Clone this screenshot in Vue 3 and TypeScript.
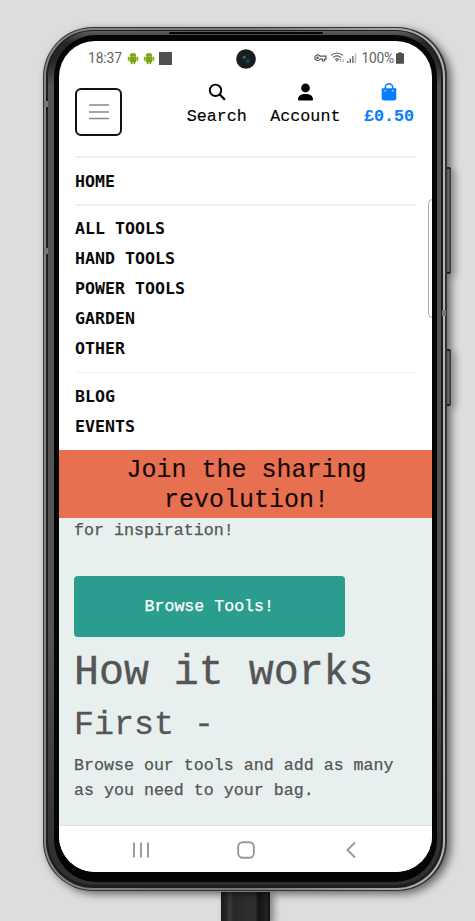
<script setup lang="ts">
const navGroups: string[][] = [
  ['Home'],
  ['All Tools', 'Hand Tools', 'Power Tools', 'Garden', 'Other'],
  ['Blog', 'Events'],
]
</script>

<template>
  <div class="stage">
    <div class="phone">
      <i class="side-key volume"></i>
      <i class="side-key power"></i>
      <i class="antenna a1"></i>
      <i class="antenna a2"></i>
      <i class="antenna a3"></i>
      <i class="earpiece"></i>
      <div class="rim">
        <div class="groove">
          <div class="metal">
            <div class="bezel">
              <div class="screen">
                <div class="status">
                  <span class="clock">18:37</span>
                  <svg v-for="n in 2" :key="n" class="droid" viewBox="0 0 12 13">
                    <path d="M3 4.3A3 3 0 0 1 9 4.3ZM3 4.8H9V10H3ZM1 5H2.3V8.6H1ZM9.7 5H11V8.6H9.7ZM4 10H5.3V12H4ZM6.7 10H8V12H6.7Z" fill="#7da514" stroke="#7da514" stroke-width=".4" />
                    <path d="M3.5 1L4.5 2.4M8.5 1L7.5 2.4" stroke="#7da514" stroke-width=".6" />
                  </svg>
                  <i class="square"></i>
                  <svg class="signals" viewBox="0 0 46 14">
                    <g fill="none" stroke="#555" stroke-width="1.2">
                      <path d="M7 5.2A2.8 2.8 0 1 0 7 8.2H9.5V10H11.5V8.2H13V5.2Z" />
                      <circle cx="4.6" cy="6.7" r=".7" />
                      <path d="M18 4.4Q24 -.4 30 4.4M20 6.6Q24 3.3 28 6.6M22 8.6Q24 7 26 8.6" />
                    </g>
                    <path d="M22.8 9.2H25.2L24 11Z" fill="#555" />
                    <path d="M27.3 11V8M26.3 9L27.3 8M30 8V11M31 10L30 11" stroke="#999" stroke-width=".8" />
                    <path d="M34 10H35.4V12H34ZM36.6 7.5H38V12H36.6ZM39.2 5H40.6V12H39.2Z" fill="#666" />
                    <path d="M41.8 2.5H43.2V12H41.8Z" fill="#bbb" />
                  </svg>
                  <span class="percent">100%</span>
                  <svg class="battery" viewBox="0 0 8 12"><path d="M2.5 .2H5.5V1.2H7.3Q8 1.2 8 1.9V11.2Q8 11.8 7.3 11.8H.7Q0 11.8 0 11.2V1.9Q0 1.2 .7 1.2H2.5Z" fill="#505050" /></svg>
                  <svg class="camera" viewBox="0 0 20 20">
                    <circle cx="10" cy="10" r="9.8" fill="#191c1d" />
                    <circle cx="10" cy="10" r="5.5" fill="#102326" />
                    <circle cx="8.2" cy="8.3" r="1.4" fill="#496b72" />
                    <circle cx="12" cy="12" r="1.8" fill="#28474c" />
                  </svg>
                </div>

                <header class="header">
                  <button class="burger" aria-label="Menu">
                    <svg viewBox="0 0 20 16"><path d="M0 1H20M0 8H20M0 14.5H20" stroke="#888" stroke-width="1.6" /></svg>
                  </button>
                  <div class="actions">
                    <a class="action">
                      <svg viewBox="0 0 18 18"><circle cx="7.5" cy="7.3" r="5.7" fill="none" stroke="#000" stroke-width="1.9" /><path d="M11.5 11.3L16.9 16.7" stroke="#000" stroke-width="2.3" /></svg>
                      <span>Search</span>
                    </a>
                    <a class="action">
                      <svg viewBox="0 0 18 18"><circle cx="9.5" cy="5" r="4.4" /><path d="M2 17.5V16C2 12.8 5.2 10.9 9.5 10.9S17 12.8 17 16V16.6Q17 17.5 16 17.5H3Q2 17.5 2 16.6Z" /></svg>
                      <span>Account</span>
                    </a>
                    <a class="action bag">
                      <svg viewBox="0 0 18 18"><path d="M5.3 8V4.5A3.7 3.7 0 0 1 12.7 4.5V8" fill="none" stroke="#0a7cff" stroke-width="1.6" /><path d="M1.7 5.2H16.3V15.3Q16.3 17.5 13.8 17.5H4.2Q1.7 17.5 1.7 15.3Z" fill="#0a7cff" /><path d="M5.3 7V8.6M12.7 7V8.6" stroke="#d9ebff" stroke-width="1.3" /></svg>
                      <span>£0.50</span>
                    </a>
                  </div>
                </header>

                <nav class="nav">
                  <ul v-for="(group, i) in navGroups" :key="i" class="group">
                    <li v-for="item in group" :key="item">{{ item }}</li>
                  </ul>
                </nav>

                <div class="banner">Join the sharing revolution!</div>

                <main class="content">
                  <p class="lead">for inspiration!</p>
                  <button class="browse">Browse Tools!</button>
                  <h1>How it works</h1>
                  <h2>First -</h2>
                  <p class="copy">Browse our tools and add as many as you need to your bag.</p>
                </main>

                <footer class="system">
                  <svg viewBox="0 0 18 18"><path d="M2 1.5V16.5M9 1.5V16.5M16 1.5V16.5" /></svg>
                  <svg viewBox="0 0 18 18"><rect x="1.2" y="1.2" width="15.6" height="15.6" rx="4.5" /></svg>
                  <svg viewBox="0 0 18 18"><path d="M13 1.5L5.5 9L13 16.5" /></svg>
                </footer>
                <i class="edge-handle"></i>
              </div>
            </div>
          </div>
        </div>
      </div>
    </div>
    <div class="cable"></div>
  </div>
</template>

<style>
body {
  margin: 0;
  background: #dddddd;
}
</style>

<style scoped>
.stage {
  box-sizing: border-box;
  width: 475px;
  height: 921px;
  padding: 27px 0 0 43px;
  overflow: hidden;
  background: #dddddd;
  font-family: "Liberation Mono", monospace;
}
.stage * {
  box-sizing: border-box;
}
.phone {
  position: relative;
  width: 404px;
  height: 864px;
  padding: 1px 2px 1px 1px;
  border-radius: 50px;
  background: #343434;
  box-shadow: 4px 3px 9px rgba(0, 0, 0, 0.55);
}
.rim {
  height: 100%;
  padding: 2px 2px 2px 2px;
  border-radius: 49px;
  background: linear-gradient(90deg, #858585, #777 50%, #b6b6b9);
}
.groove {
  height: 100%;
  padding: 1px 2px 3px 2px;
  border-radius: 47px;
  background: #1d1d1e;
}
.metal {
  height: 100%;
  padding: 4px 4px 3px 6px;
  border-radius: 45px;
  background: linear-gradient(180deg, #5f5e5f 0, #262626 12px, #262626 30px, #565556 55px, #565556 70%, #303030 97%);
}
.bezel {
  height: 100%;
  padding: 6px 5px 10px 5px;
  border-radius: 42px;
  background: #050505;
}
.screen {
  position: relative;
  display: flex;
  flex-direction: column;
  height: 831px;
  border-radius: 36px;
  overflow: hidden;
  background: #fff;
}
.side-key {
  position: absolute;
  left: 404px;
  width: 4px;
  background: linear-gradient(90deg, #555, #666 40%, #2d2d2d);
  border-top: 2px solid #222;
  border-bottom: 2px solid #222;
  border-radius: 0 2px 2px 0;
  box-shadow: 5px 3px 7px rgba(0, 0, 0, 0.3);
}
.volume {
  top: 140px;
  height: 107px;
}
.power {
  top: 322px;
  height: 57px;
}
.antenna {
  position: absolute;
  z-index: 1;
  width: 4px;
  height: 6px;
  background: #777;
}
.a1 {
  left: 1px;
  top: 74px;
}
.a2 {
  left: 1px;
  top: 221px;
}
.a3 {
  right: 1px;
  top: 283px;
}
.earpiece {
  position: absolute;
  z-index: 1;
  left: 126px;
  top: 5px;
  width: 154px;
  height: 2px;
  border-radius: 1px;
  background: #050505;
}
.status {
  position: relative;
  display: flex;
  align-items: center;
  height: 35px;
  padding: 0 28px 0 29px;
  color: #626262;
  font: 13.8px/35px Roboto, sans-serif;
}
.clock {
  width: 39px;
  letter-spacing: -0.1px;
}
.droid {
  width: 12px;
  height: 13px;
  margin-right: 4px;
}
.square {
  width: 13px;
  height: 13px;
  margin-top: -1px;
  background: #505050;
}
.signals {
  width: 46px;
  height: 14px;
  margin: -2px 0 0 auto;
}
.percent {
  margin: 0 2px 0 2px;
  letter-spacing: -0.2px;
}
.battery {
  width: 8px;
  height: 12px;
  margin-top: -1px;
}
.camera {
  position: absolute;
  left: 176.5px;
  top: 7.5px;
  width: 20px;
  height: 20px;
}
.header {
  display: flex;
  justify-content: space-between;
  height: 80px;
  padding: 6px 18px 0 16px;
}
.burger {
  display: flex;
  align-items: center;
  justify-content: center;
  width: 47px;
  height: 48px;
  margin-top: 6px;
  padding: 0;
  border: 2px solid #111;
  border-radius: 6px;
  background: #fff;
}
.burger svg {
  width: 20px;
  height: 16px;
}
.actions {
  display: flex;
  gap: 23.5px;
}
.action {
  display: flex;
  flex-direction: column;
  align-items: center;
  color: #000;
  font-size: 16.7px;
  line-height: 20px;
  -webkit-text-stroke: 0.15px;
}
.action svg {
  width: 18px;
  height: 18px;
  margin: 1px 0 6px;
}
.bag {
  color: #0a7cff;
  font-weight: 700;
}
.nav {
  padding: 0 16px;
}
.group {
  margin: 0;
  padding: 9px 0 7px;
  border-top: 2px solid #f1f1f2;
  list-style: none;
  color: #0a0a0a;
  font-family: "DejaVu Sans Mono", monospace;
  font-size: 16.6px;
  font-weight: 700;
  text-transform: uppercase;
}
.group:nth-child(2) {
  padding: 8px 0;
}
.group:last-child {
  padding: 9px 0 8px;
  border-top-width: 1px;
}
.group li {
  height: 30px;
  line-height: 30px;
}
.banner {
  height: 68px;
  padding: 6px 59px 2px 61px;
  background: #e77051;
  color: #160805;
  font-size: 25px;
  line-height: 30px;
  text-align: center;
  -webkit-text-stroke: 0.15px;
}
.content {
  flex: 1;
  padding: 0 15px;
  background: #e7f0ef;
  color: #555;
}
.content p {
  margin: 0;
  font-size: 16.65px;
  line-height: 25px;
  -webkit-text-stroke: 0.25px;
}
.browse {
  display: block;
  width: 270.5px;
  height: 61px;
  margin: 33px 0 9px;
  padding: 0;
  border: 0;
  border-radius: 4px;
  background: #2b9d8e;
  color: #fff;
  font: 16.6px/61px "Liberation Mono", monospace;
  -webkit-text-stroke: 0.25px;
}
h1,
h2 {
  margin: 0;
  font-weight: 400;
}
h1 {
  font-size: 41.6px;
  line-height: 54px;
  -webkit-text-stroke: 0.4px;
}
h2 {
  height: 53px;
  font-size: 33.3px;
  line-height: 51px;
  -webkit-text-stroke: 0.3px;
}
.system {
  display: flex;
  align-items: center;
  justify-content: center;
  gap: 87px;
  height: 47px;
  padding-top: 2px;
  border-top: 1px solid #dedfdf;
  background: #fff;
}
.system svg {
  width: 18px;
  height: 18px;
  fill: none;
  stroke: #999;
  stroke-width: 1.9;
}
.edge-handle {
  position: absolute;
  right: -5px;
  top: 158px;
  width: 9px;
  height: 119px;
  border: 1px solid #aaa;
  border-radius: 5px;
  background: #fff;
}
.cable {
  width: 49px;
  height: 30px;
  margin: 1px 0 0 178px;
  background: linear-gradient(90deg, #191919, #292929 12%, #3c3c3c 18%, #292929 26%, #303030 70%, #151515 76%, #222 94%, #111);
  box-shadow: 4px 2px 7px rgba(0, 0, 0, 0.4);
}
</style>
